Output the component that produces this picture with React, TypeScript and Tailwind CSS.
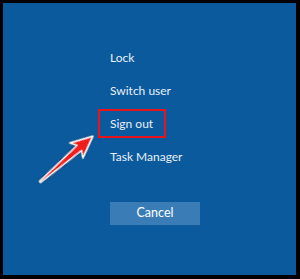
const items = ['Lock', 'Switch user', 'Sign out', 'Task Manager'];

export default function App() {
  return (
    <div className="w-[300px] h-[279px] bg-black p-[3px] pr-[4px] pb-[4px]">
      <div
        className="relative w-full h-full bg-[#0b5a9d] pt-[38px] pl-[107px] text-[#e9f0f7]"
        style={{ fontFamily: 'Lato, "Noto Sans", sans-serif' }}
      >
        <div className="flex flex-col">
          {items.map((label) => (
            <div key={label} className="h-[33px] flex items-center text-[12px] leading-none">
              {label}
            </div>
          ))}
        </div>

        <button className="mt-[29px] w-[90px] h-[23px] bg-[#3a7db6] text-white text-[12.5px] flex items-center justify-center">
          Cancel
        </button>

        {/* annotation: highlight box */}
        <div className="absolute left-[95px] top-[106px] w-[68px] h-[29px] border-2 border-[#e8131b]" />

        {/* annotation: arrow */}
        <svg className="absolute left-0 top-0" width="296" height="275" viewBox="0 0 296 275">
          <defs>
            <filter id="sh" x="-20%" y="-20%" width="140%" height="140%">
              <feDropShadow dx="0" dy="0" stdDeviation="0.8" floodColor="#000" floodOpacity="0.5" />
            </filter>
          </defs>
          <g transform="translate(37 179) rotate(-40.9)" filter="url(#sh)">
            <polygon
              points="0,-0.8 52,-3.4 48,-10 70,0 48,10 52,3.4 0,0.8"
              fill="#f01a1a"
              stroke="#ffffff"
              strokeWidth="1.4"
              strokeLinejoin="round"
            />
          </g>
        </svg>
      </div>
    </div>
  );
}
